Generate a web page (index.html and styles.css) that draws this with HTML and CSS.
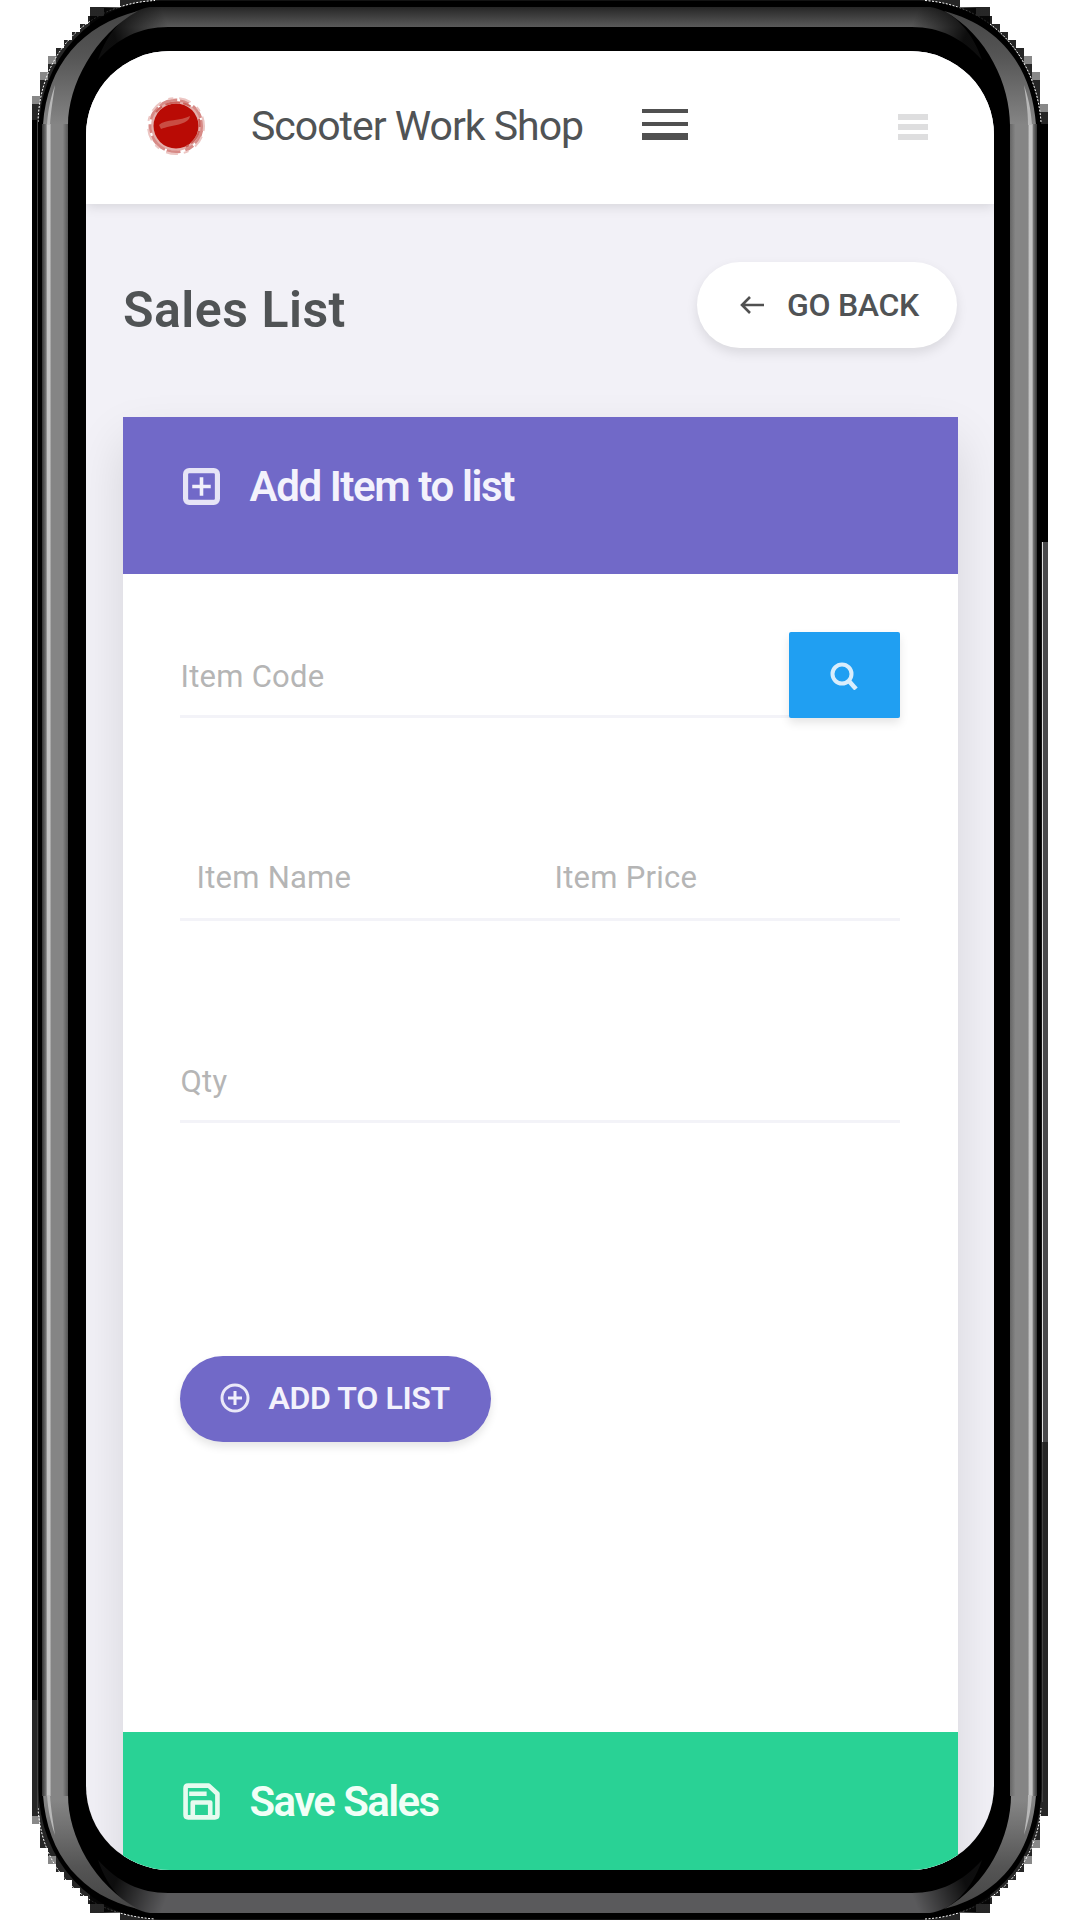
FILE: index.html
```html
<!DOCTYPE html>
<html lang="en">
<head>
<meta charset="utf-8">
<title>Scooter Work Shop</title>
<link rel="stylesheet" href="styles.css">
</head>
<body>
<div class="phone">
  <svg class="frame" viewBox="0 0 1080 1920" aria-hidden="true">
    <defs>
      <linearGradient id="left"><stop offset="0" stop-color="#333"/><stop offset=".16" stop-color="#777"/><stop offset=".2" stop-color="#c4c4c4"/><stop offset=".3" stop-color="#c4c4c4"/><stop offset=".36" stop-color="#858585"/><stop offset=".8" stop-color="#858585"/><stop offset="1" stop-color="#555"/></linearGradient>
      <linearGradient id="right"><stop offset="0" stop-color="#666"/><stop offset=".2" stop-color="#858585"/><stop offset=".66" stop-color="#858585"/><stop offset=".72" stop-color="#c4c4c4"/><stop offset=".82" stop-color="#c4c4c4"/><stop offset=".86" stop-color="#777"/><stop offset="1" stop-color="#333"/></linearGradient>
      <linearGradient id="top" gradientUnits="userSpaceOnUse" x1="0" y1="7" x2="0" y2="27"><stop offset="0" stop-color="#262626"/><stop offset="1" stop-color="#5a5a5a"/></linearGradient>
      <linearGradient id="fadeTop" gradientUnits="userSpaceOnUse" x1="0" y1="10" x2="0" y2="125"><stop offset="0" stop-color="#444"/><stop offset=".4" stop-color="#555"/><stop offset="1" stop-color="#858585"/></linearGradient>
      <linearGradient id="fadeBottom" gradientUnits="userSpaceOnUse" x1="0" y1="1910" x2="0" y2="1800"><stop offset="0" stop-color="#444"/><stop offset=".4" stop-color="#555"/><stop offset="1" stop-color="#858585"/></linearGradient>
      <linearGradient id="endL" gradientUnits="userSpaceOnUse" x1="112" y1="30" x2="162" y2="10"><stop offset="0" stop-color="#000" stop-opacity=".85"/><stop offset="1" stop-color="#000" stop-opacity="0"/></linearGradient>
      <linearGradient id="endR" gradientUnits="userSpaceOnUse" x1="968" y1="30" x2="918" y2="10"><stop offset="0" stop-color="#000" stop-opacity=".85"/><stop offset="1" stop-color="#000" stop-opacity="0"/></linearGradient>
      <g id="band"><path d="M150 7C128 10 108 30 98 60 118 38 140 27 168 27H912C940 27 962 38 982 60 972 30 952 10 930 7z"/></g>
      <g id="ends"><path fill="url(#endL)" d="M90 7h80v58H90z"/><path fill="url(#endR)" d="M910 7h80v58h-80z"/></g>
    </defs>
    <path fill="#262626" d="M32 96h8V72h8V56h8v-8h8v-8h8v-8h8v-8h8v-8h16V8h16V0H960v8h16v8h16v8h8v8h8v8h8v8h8v8h8v16h8v32h8V1816h-8v32h-8v16h-8v8h-8v8h-8v8h-8v8h-8v8h-16v8h-16v8H120v-8h-16v-8H88v-8h-8v-8h-8v-8h-8v-8h-8v-8h-8v-16h-8v-24h-8z"/>
    <path fill="#888" d="M32 96h8v8h-8zM40 72h8v8h-8zM48 56h8v8h-8zM1024 56h8v8h-8zM1032 72h8v8h-8zM1040 104h8v8h-8zM32 1816h8v8h-8zM48 1856h8v8h-8zM1032 1840h8v8h-8zM1024 1856h8v8h-8z"/>
    <path fill="#000" d="M32 120h12v1580H32zM1036 124h12v418h-12z"/>
    <path fill="#49494b" d="M1042 542h6v900h-6z"/>
    <rect x="38.500" y=".5" width="1003" height="1919" rx="122" ry="132" fill="#000"/>
    <path fill="none" stroke="#fff" stroke-dasharray="2 1.500" d="M38 122C40 54 86 4 155 .5M925 .5C990 5 1036 55 1041 122M38 1808c4 62 44 106 117 111M925 1919c68-4 112-53 116-111"/>
    <path stroke="#ddd" d="M1042.500 542v900"/>
    <path stroke="#444" d="M37.500 120v1690M1042.500 1442v360"/>
    <use href="#band" fill="url(#top)"/>
    <use href="#ends"/>
    <g transform="matrix(1 0 0 -1 0 1920)"><use href="#band" fill="#5a5a5c"/><use href="#ends"/></g>
    <path fill="url(#fadeTop)" d="M43 125C47 65 82 25 138 11 94 35 68 86 68 125zM1036 125C1032 65 998 25 944 11c44 24 66 75 66 114z"/>
    <path fill="url(#fadeBottom)" d="M43 1795c4 60 39 101 95 114-44-24-70-73-70-114zM1036 1795c-4 60-38 101-92 114 44-24 67-73 67-114z"/>
    <path fill="url(#left)" d="M42 124h26v1672H42z"/>
    <path fill="url(#right)" d="M1010 124h27v1672h-27z"/>
    <path fill="#b8b8b8" d="M47 125c1-16 4-28 8-40-2 14-4 25-5 40zM1032 125c-1-16-4-28-8-40 2 14 4 25 4 40zM47 1795c1 16 4 28 8 40-2-14-4-25-5-40zM1032 1795c-1 16-4 28-8 40 2-14 4-25 4-40z"/>
  </svg>
  <main class="screen">
    <header class="topbar">
      <svg class="logo" viewBox="0 0 60 60" aria-hidden="true">
        <circle cx="30" cy="31" r="25" fill="#e4b0ac"/>
        <circle cx="30" cy="31" r="26" fill="none" stroke="#d78a86" stroke-width="3" stroke-dasharray="19 3 9 5 14 2"/>
        <circle cx="30" cy="31" r="28" fill="none" stroke="#ecc6c3" stroke-width="2" stroke-dasharray="5 6 12 8"/>
        <circle cx="30" cy="31" r="22.500" fill="#b90b05"/>
        <path fill="none" stroke="#cc625b" stroke-width="2" stroke-dasharray="8 4 15 3" d="M10 17C20 5 37 5 47 13M53 24c3 13-3 22-13 28"/>
        <path fill="#c94d43" d="M13 30c6-6 22-4 31-9-1 9-19 9-29 13z"/>
      </svg>
      <span class="brand">Scooter Work Shop</span>
      <svg class="menu" viewBox="0 0 48 32" aria-hidden="true"><path fill="#505050" d="M1 0h46v4H1zM1 13h46v4H1zM1 24h46v7H1z"/></svg>
      <svg class="more" viewBox="0 0 30 28" aria-hidden="true"><path fill="#dededf" d="M0 0h30v6H0zM0 10h30v6H0zM0 20h30v6H0z"/></svg>
    </header>
    <section class="title-row">
      <h1 class="title">Sales List</h1>
      <button class="btn back">
        <svg class="arrow" viewBox="0 0 24 20" aria-hidden="true"><path fill="none" stroke="#505050" stroke-width="2.600" d="M24 10H2M10 2 2 10l8 8"/></svg>
        <span class="back-text">GO BACK</span>
      </button>
    </section>
    <section class="card">
      <div class="card-head">
        <svg class="head-icon" viewBox="0 0 36 36" aria-hidden="true"><rect x="2.500" y="2.500" width="31" height="31" rx="3.500" fill="none" stroke="#e6e4f6" stroke-width="5"/><path stroke="#f1f0fb" stroke-width="3.500" d="M18 9v18M9 18h18"/></svg>
        <h2 class="head-text">Add Item to list</h2>
      </div>
      <form class="form">
        <div class="field code"><label class="label l-code">Item Code</label><span class="search"><svg class="lens" viewBox="0 0 28 28" aria-hidden="true"><circle cx="12" cy="12" r="9.500" fill="none" stroke="#d9edfc" stroke-width="4"/><path stroke="#d9edfc" stroke-width="4.500" d="m18 18 8 9"/></svg></span></div>
        <div class="field pair"><label class="label l-name">Item Name</label><label class="label l-price">Item Price</label></div>
        <div class="field qty"><label class="label l-qty">Qty</label></div>
        <button type="button" class="btn add">
          <svg class="plus" viewBox="0 0 30 30" aria-hidden="true"><circle cx="15" cy="15" r="13" fill="none" stroke="#eae8f8" stroke-width="3"/><path stroke="#f1f0fb" stroke-width="3" d="M15 8v14M8 15h14"/></svg>
          <span class="add-text">ADD TO LIST</span>
        </button>
      </form>
      <div class="card-head save">
        <svg class="head-icon" viewBox="0 0 36 36" aria-hidden="true"><path fill="none" stroke="#e6fbef" stroke-width="4.500" stroke-linejoin="round" d="M5 2.500h20l8.500 8V31q0 2.500-2.500 2.500H5Q2.500 33.500 2.500 31V5Q2.500 2.500 5 2.500zM6 10.500h17M9.500 33V19h17v14"/></svg>
        <h2 class="save-text">Save Sales</h2>
      </div>
    </section>
  </main>
</div>
</body>
</html>
```
FILE: styles.css
```css
* { box-sizing: border-box; }
body { margin: 0; background: #fff; font-family: Roboto, "Liberation Sans", sans-serif; color: #505355; }
h1, h2 { margin: 0; }
svg { display: block; flex: none; }
.phone { position: relative; width: 1080px; height: 1920px; padding: 51px 86px 50px 86px; overflow: hidden; }
.frame { position: absolute; inset: 0; width: 1080px; height: 1920px; }
.screen { position: relative; height: 1819px; overflow: hidden; border-radius: 84px; background: #f2f1f7; display: flex; flex-direction: column; }
.topbar { height: 153px; flex: none; display: flex; align-items: flex-start; padding: 44px 66px 0 60px; background: #fff; box-shadow: 0 2px 12px rgba(0,0,0,.13); }
.logo { width: 60px; height: 60px; }
.brand { width: 336px; margin-left: 45px; font-size: 41px; line-height: 62px; letter-spacing: -1px; white-space: nowrap; }
.menu { width: 48px; height: 32px; margin: 14px 0 0 54px; }
.more { width: 30px; height: 28px; margin: 19px 0 0 auto; }
.title-row { height: 213px; flex: none; padding: 58px 37px 0 37px; display: flex; justify-content: space-between; align-items: flex-start; }
.title { font-size: 50px; line-height: 60px; font-weight: 600; letter-spacing: .5px; margin-top: 18px; white-space: nowrap; }
.btn { height: 86px; border: 0; border-radius: 43px; display: flex; align-items: center; font-family: inherit; white-space: nowrap; }
.back { width: 260px; padding: 0 0 0 43px; background: #fff; color: #505355; box-shadow: 0 5px 12px rgba(0,0,0,.1); }
.arrow { width: 24px; height: 20px; }
.back-text { margin-left: 23px; font-size: 32px; font-weight: 500; letter-spacing: -.3px; }
.card { flex: none; width: 835px; margin-left: 36.500px; background: #fff; box-shadow: 0 24px 48px rgba(0,0,0,.12); }
.card-head { height: 157px; background: #7169c8; color: #f3f2fc; display: flex; align-items: flex-start; padding: 51px 0 0 60px; }
.head-icon { width: 37px; height: 37px; }
.head-text, .save-text { margin-left: 30px; margin-top: -8px; font-size: 42px; line-height: 54px; font-weight: 600; letter-spacing: -1.4px; white-space: nowrap; }
.save-text { letter-spacing: -1.6px; }
.form { height: 1158px; padding: 58px 58px 0 57px; }
.field { border-bottom: 3px solid #f3f3f8; display: flex; color: #b5b5b5; }
.label { font-size: 31px; line-height: 40px; letter-spacing: .25px; white-space: nowrap; }
.code { height: 86px; padding: 25px 0 0 1px; justify-content: space-between; }
.search { width: 111px; height: 86px; margin-top: -25px; background: #209ff2; display: flex; align-items: center; justify-content: center; border-radius: 2px; box-shadow: 0 5px 10px rgba(0,0,0,.1); }
.lens { width: 28px; height: 28px; margin-top: 2px; }
.pair { margin-top: 118px; height: 85px; padding: 22px 0 0 17px; }
.l-name { width: 358px; }
.qty { margin-top: 116px; height: 86px; padding: 25px 0 0 1px; }
.add { width: 311px; margin-top: 233px; padding: 0 0 0 40px; background: #7169c8; color: #f3f2fc; box-shadow: 0 5px 9px rgba(0,0,0,.1); }
.plus { width: 30px; height: 30px; margin-top: -2px; }
.add-text { margin-left: 19px; margin-top: -3px; font-size: 32px; font-weight: 600; letter-spacing: -.35px; }
.save { height: 180px; background: #29d295; color: #f1fff7; }
```
